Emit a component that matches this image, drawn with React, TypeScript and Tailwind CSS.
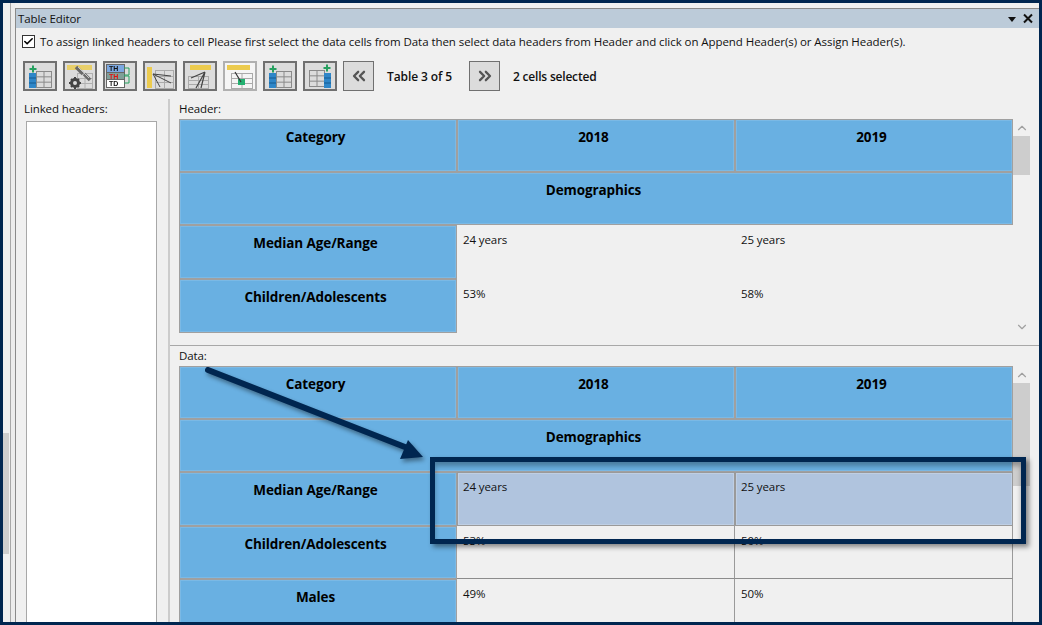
import React from "react";
import { Check, ChevronsLeft, ChevronsRight, ChevronDown, ChevronUp } from "lucide-react";

const Grid = ({ x, y, w = 15, h = 16, color = "#8a8a8a" }: { x: number; y: number; w?: number; h?: number; color?: string }) => {
  const r = h / 3;
  const c = w / 2;
  return (
    <g stroke={color} strokeWidth="1" fill="none">
      <rect x={x + 0.5} y={y + 0.5} width={w} height={h} />
      <path d={`M${x} ${y + r + 0.5}h${w}M${x} ${y + 2 * r + 0.5}h${w}M${x + c + 0.5} ${y}v${h}`} />
    </g>
  );
};

const Plus = ({ x, y }: { x: number; y: number }) => (
  <path d={`M${x} ${y - 3.5}v7M${x - 3.5} ${y}h7`} stroke="#27a060" strokeWidth="2" fill="none" />
);

const BlueCol = ({ x, y }: { x: number; y: number }) => (
  <g>
    <rect x={x} y={y} width="7" height="15" fill="#2f86c8" />
    <path d={`M${x} ${y + 5}h7M${x} ${y + 10}h7`} stroke="#155a90" />
  </g>
);

const icons: React.ReactNode[] = [
  <>
    <Grid x={13} y={10} />
    <BlueCol x={6} y={12} />
    <Plus x={10} y={8} />
  </>,
  <>
    <rect x="4" y="4" width="25" height="5" fill="#e8cf6a" />
    <Grid x={14} y={12} w={15} h={15} color="#b0b0b0" />
    <path d="M13 6l7 7" stroke="#6a6a6a" strokeWidth="3.5" fill="none" />
    <path d="M21 13l6 6" stroke="#6a6a6a" strokeWidth="3.5" fill="none" />
    <path d="M15 6l11 11" stroke="#c8c8c8" strokeWidth="1" fill="none" />
    <circle cx="12" cy="22" r="3.5" fill="none" stroke="#444" strokeWidth="3" />
    <path d="M12 16v2M12 26v2M6 22h2M16 22h2M8 18l1 1M15 25l1 1M16 18l-1 1M8 26l1-1" stroke="#444" strokeWidth="2" />
  </>,
  <>
    <rect x="3.5" y="3.5" width="18" height="8" fill="#7ba7e0" stroke="#666" />
    <rect x="3.5" y="11.5" width="18" height="7" fill="#7f9f98" stroke="#666" />
    <rect x="3.5" y="18.5" width="18" height="8" fill="#fff" stroke="#666" />
    <text x="6" y="10" fontSize="7" fontWeight="700" fontFamily="Liberation Sans" fill="#111">TH</text>
    <text x="6" y="17.5" fontSize="7" fontWeight="700" fontFamily="Liberation Sans" fill="#e01010">TH</text>
    <text x="6" y="25" fontSize="7" fontWeight="700" fontFamily="Liberation Sans" fill="#111">TD</text>
    <path d="M21 7h5v7h-5M21 15h5v7h-5" stroke="#27a060" fill="none" />
  </>,
  <>
    <rect x="4" y="6" width="5" height="21" fill="#eccb4e" />
    <Grid x={12} y={9} w={18} h={18} color="#aaaaaa" />
    <path d="M10 13l18 2M10 13l18 9M10 13l7 13" stroke="#444" strokeWidth="1" fill="none" />
  </>,
  <>
    <rect x="7" y="4" width="21" height="5" fill="#eccb4e" />
    <Grid x={5} y={15} w={20} h={12} color="#aaaaaa" />
    <path d="M22 11L8 17M22 11L13 27M22 11L18 27" stroke="#444" strokeWidth="1.2" fill="none" />
  </>,
  <>
    <rect x="4" y="4" width="23" height="5" fill="#eccb4e" />
    <Grid x={8} y={12} w={21} h={15} color="#aaaaaa" />
    <rect x="15" y="18" width="7" height="6" fill="#22b070" />
    <path d="M12 11l6 10" stroke="#333" strokeWidth="1.2" fill="none" />
  </>,
  <>
    <Grid x={13} y={10} />
    <BlueCol x={6} y={12} />
    <Plus x={10} y={8} />
  </>,
  <>
    <Grid x={6} y={9} />
    <BlueCol x={21} y={12} />
    <Plus x={24} y={7} />
  </>,
];

const ToolButton = ({ index }: { index: number }) => (
  <div
    className={`w-[34px] h-[30px] border-2 ${
      index === 5 ? "border-[#b0b0b0] bg-[#f5f5f5]" : "border-[#707070] bg-[#dcdcdc]"
    }`}
  >
    <svg width="30" height="26" viewBox="2 2 30 26" className="blur-[0.3px]">
      {icons[index]}
    </svg>
  </div>
);

const HeadCell = ({ text, wide }: { text: string; wide?: boolean }) => (
  <div
    className={`border border-[#a0a0a0] bg-[#69b0e2] pr-[5px] pt-[8px] text-center text-[13.5px] font-bold leading-[18px] text-black shadow-[inset_0_0_0_1px_rgba(255,255,255,0.12)] ${
      wide ? "col-span-3" : ""
    }`}
  >
    {text}
  </div>
);

const DataCell = ({ text, mode }: { text: string; mode: "plain" | "selected" | "line" }) => (
  <div
    className={`text-[11.5px] leading-[16px] text-[#111] ${
      mode === "selected"
        ? "border border-[#9a9a9a] bg-[#b0c4de] pl-[5px] pt-[6px] shadow-[inset_0_0_0_1px_rgba(255,255,255,0.2)]"
        : mode === "line"
          ? "border-b border-r border-b-[#8c8c8c] border-r-[#9a9a9a] pl-[6px] pt-[7px]"
          : "pl-[6px] pt-[7px]"
    }`}
  >
    {text}
  </div>
);

const Scrollbar = ({ thumbClass }: { thumbClass: string }) => (
  <div className="flex w-[17px] flex-col items-center">
    <ChevronUp className="mt-[1px] h-[16px] w-[14px] text-[#a0a0a0]" strokeWidth={2} />
    <div className={`w-[17px] bg-[#cdcdcd] ${thumbClass}`} />
  </div>
);

export default function App() {
  return (
    <div className="relative flex h-[625px] w-[1042px] overflow-hidden border-[3px] border-[#002650] bg-[#f0f0f0] font-['Open_Sans','Noto_Sans',sans-serif] text-[11.5px] tracking-[-0.1px] text-[#111]">
      {/* page scrollbar behind the panel */}
      <div className="w-[8px] shrink-0 border-r border-[#a8a8a8]">
        <div className="mt-[430px] h-[121px] w-[6px] bg-[#cdcdcd]" />
      </div>
      <div className="w-[4px] shrink-0 bg-[#ececec]" />

      <div className="mt-[5px] flex min-w-0 flex-1 flex-col border-l border-t border-[#8a8a8a]">
        {/* Title bar */}
        <div className="flex h-[19px] shrink-0 items-center bg-[#bccbd9] pl-[2px]">
          <span className="flex-1 leading-[18px]">Table Editor</span>
          <svg width="34" height="14" viewBox="0 0 34 14">
            <path d="M3 5h8l-4 5z" fill="#111" />
            <path d="M19 2.5l8 8M27 2.5l-8 8" stroke="#111" strokeWidth="2" />
          </svg>
        </div>

        {/* Instructions */}
        <div className="ml-[6px] mt-[7px] flex h-[13px] shrink-0 items-center gap-[5px]">
          <span className="flex h-[13px] w-[13px] items-center justify-center border border-[#333] bg-white">
            <Check className="h-[11px] w-[11px] text-black" strokeWidth={3.5} />
          </span>
          <span className="whitespace-nowrap leading-[16px] tracking-[-0.06px]">
            To assign linked headers to cell Please first select the data cells from Data then select data headers from Header and click on Append Header(s) or Assign Header(s).
          </span>
        </div>

        {/* Toolbar */}
        <div className="ml-[7px] mt-[13px] flex h-[30px] shrink-0 items-center">
          <div className="flex gap-[6px]">
            {icons.map((_, i) => (
              <ToolButton key={i} index={i} />
            ))}
          </div>
          <div className="ml-[6px] flex h-[30px] w-[31px] items-center justify-center border border-[#707070] bg-[#dcdcdc]">
            <ChevronsLeft className="h-[20px] w-[20px] text-[#555]" strokeWidth={2.75} />
          </div>
          <span className="ml-[13px] w-[82px] whitespace-nowrap pt-[2px] text-[12px] font-semibold">Table 3 of 5</span>
          <div className="flex h-[30px] w-[31px] items-center justify-center border border-[#707070] bg-[#dcdcdc]">
            <ChevronsRight className="h-[20px] w-[20px] text-[#555]" strokeWidth={2.75} />
          </div>
          <span className="ml-[13px] whitespace-nowrap pt-[2px] text-[12px] font-semibold tracking-[-0.2px]">2 cells selected</span>
        </div>

        {/* Body */}
        <div className="mt-[8px] flex min-h-0 flex-1">
          {/* Linked headers */}
          <div className="w-[152px] shrink-0 pl-[8px] pt-[1px]">
            <div className="h-[21px] leading-[18px]">Linked headers:</div>
            <div className="ml-[2px] h-[520px] w-[131px] border border-[#a8a8a8] bg-white" />
          </div>
          <div className="w-[2px] shrink-0 bg-[#cccccc]" />

          <div className="flex min-w-0 flex-1 flex-col">
            {/* Header pane */}
            <div className="h-[247px] shrink-0 border-b border-[#a8a8a8] pl-[9px] pt-[1px]">
              <div className="h-[19px] leading-[18px]">Header:</div>
              <div className="flex">
                <div className="grid w-[834px] grid-cols-3 grid-rows-[53px_53px_54px_54px]">
                  <HeadCell text="Category" />
                  <HeadCell text="2018" />
                  <HeadCell text="2019" />
                  <HeadCell text="Demographics" wide />
                  <HeadCell text="Median Age/Range" />
                  <DataCell text="24 years" mode="plain" />
                  <DataCell text="25 years" mode="plain" />
                  <HeadCell text="Children/Adolescents" />
                  <DataCell text="53%" mode="plain" />
                  <DataCell text="58%" mode="plain" />
                </div>
                <div className="flex h-[216px] w-[17px] flex-col items-center justify-between">
                  <div className="flex flex-col items-center">
                    <ChevronUp className="mt-[1px] h-[16px] w-[14px] text-[#a0a0a0]" strokeWidth={2} />
                    <div className="h-[39px] w-[17px] bg-[#cdcdcd]" />
                  </div>
                  <ChevronDown className="h-[16px] w-[14px] text-[#a0a0a0]" strokeWidth={2} />
                </div>
              </div>
            </div>

            {/* Data pane */}
            <div className="min-h-0 flex-1 overflow-hidden pl-[9px]">
              <div className="h-[20px] pt-[1px] leading-[18px]">Data:</div>
              <div className="flex">
                <div className="grid w-[834px] grid-cols-3 grid-rows-[53px_53px_54px_53px_53px]">
                  <HeadCell text="Category" />
                  <HeadCell text="2018" />
                  <HeadCell text="2019" />
                  <HeadCell text="Demographics" wide />
                  <HeadCell text="Median Age/Range" />
                  <DataCell text="24 years" mode="selected" />
                  <DataCell text="25 years" mode="selected" />
                  <HeadCell text="Children/Adolescents" />
                  <DataCell text="53%" mode="line" />
                  <DataCell text="50%" mode="line" />
                  <HeadCell text="Males" />
                  <DataCell text="49%" mode="line" />
                  <DataCell text="50%" mode="line" />
                </div>
                <Scrollbar thumbClass="h-[103px]" />
              </div>
            </div>
          </div>
        </div>
      </div>

      {/* Callout drawn over the screenshot */}
      <svg
        width="240"
        height="110"
        viewBox="0 0 240 110"
        className="absolute left-[197px] top-[357px] drop-shadow-[2px_3px_2px_rgba(0,0,0,0.4)]"
      >
        <path d="M8 10L210 89" stroke="#002650" strokeWidth="6" strokeLinecap="round" fill="none" />
        <path d="M223 97L208 80L200 99z" fill="#002650" />
      </svg>
      <div className="absolute left-[427px] top-[454px] h-[87px] w-[596px] border-[5px] border-[#002650] shadow-[3px_3px_5px_rgba(0,0,0,0.45),inset_0_4px_5px_rgba(0,0,0,0.3)]" />
    </div>
  );
}
